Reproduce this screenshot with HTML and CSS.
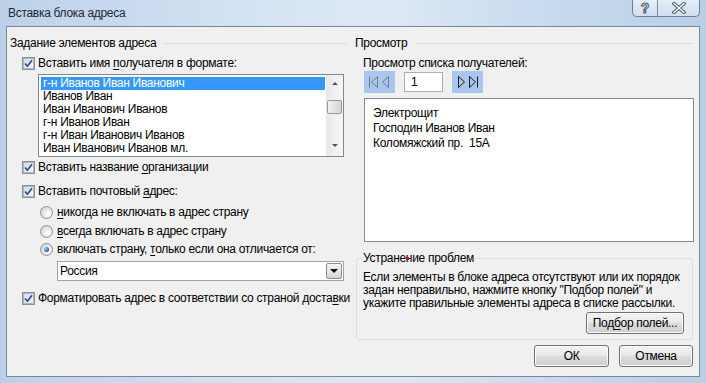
FILE: index.html
```html
<!DOCTYPE html>
<html>
<head>
  <meta charset="utf-8">
  <title>Вставка блока адреса</title>
  <link rel="stylesheet" href="styles.css">
</head>
<body>
  <div class="window">
    <div class="titlebar">
      <span class="title">Вставка блока адреса</span>
      <div class="caption-buttons">
        <span class="cap help">?</span>
        <span class="cap close">
          <svg width="16" height="12" viewBox="0 0 16 12">
            <path d="M3 1.5 L13 10.5 M13 1.5 L3 10.5" stroke="#4d5a6b" stroke-width="3.4" stroke-linecap="square" fill="none"/>
            <path d="M3 1.5 L13 10.5 M13 1.5 L3 10.5" stroke="#ffffff" stroke-width="1.4" stroke-linecap="square" fill="none"/>
          </svg>
        </span>
      </div>
    </div>

    <div class="client">
      <div class="col left">
        <div class="group-head"><span>Задание элементов адреса</span><i class="rule"></i></div>

        <label class="opt cb1"><span class="check"><svg width="9" height="9" viewBox="0 0 9 9"><path d="M1 4.5 L3.4 7.2 L8 1.2" stroke="#2f4a8c" stroke-width="1.7" fill="none"/></svg></span><span>Вставить имя <u>п</u>олучателя в формате:</span></label>

        <div class="listbox">
          <ul class="items">
            <li class="sel">г-н Иванов Иван Иванович</li>
            <li>Иванов Иван</li>
            <li>Иван Иванович Иванов</li>
            <li>г-н Иванов Иван</li>
            <li>г-н Иван Иванович Иванов</li>
            <li>Иван Иванович Иванов мл.</li>
          </ul>
          <div class="vscroll">
            <span class="arrow up"></span>
            <span class="thumb"></span>
            <span class="arrow down"></span>
          </div>
        </div>

        <label class="opt cb2"><span class="check"><svg width="9" height="9" viewBox="0 0 9 9"><path d="M1 4.5 L3.4 7.2 L8 1.2" stroke="#2f4a8c" stroke-width="1.7" fill="none"/></svg></span><span>Вставить название <u>о</u>рганизации</span></label>
        <label class="opt cb3"><span class="check"><svg width="9" height="9" viewBox="0 0 9 9"><path d="M1 4.5 L3.4 7.2 L8 1.2" stroke="#2f4a8c" stroke-width="1.7" fill="none"/></svg></span><span>Вставить почтовый <u>а</u>дрес:</span></label>

        <label class="opt radio r1"><span class="dot"></span><span><u>н</u>икогда не включать в адрес страну</span></label>
        <label class="opt radio r2"><span class="dot"></span><span><u>в</u>сегда включать в адрес страну</span></label>
        <label class="opt radio r3"><span class="dot on"></span><span>включать страну, <u>т</u>олько если она отличается от:</span></label>

        <div class="combo">
          <span class="combo-text">Россия</span>
          <span class="combo-btn"></span>
        </div>

        <label class="opt cb4"><span class="check"><svg width="9" height="9" viewBox="0 0 9 9"><path d="M1 4.5 L3.4 7.2 L8 1.2" stroke="#2f4a8c" stroke-width="1.7" fill="none"/></svg></span><span>Форматировать адрес в соответствии со страной доста<u>в</u>ки</span></label>
      </div>

      <div class="col right">
        <div class="group-head"><span>Просмотр</span><i class="rule"></i></div>

        <div class="preview-label">Просмотр списка получателей:</div>

        <div class="nav">
          <span class="nav-pair">
            <svg width="31" height="22" viewBox="0 0 31 22">
              <path d="M5.5 5.5 V16.5 M13.5 5.5 L7.5 11 L13.5 16.5 Z M24.5 5.5 L18.5 11 L24.5 16.5 Z" stroke="#6c7a8c" fill="none"/>
            </svg>
          </span>
          <span class="record">1</span>
          <span class="nav-pair">
            <svg width="31" height="22" viewBox="0 0 31 22">
              <path d="M6.5 5.5 L12.5 11 L6.5 16.5 Z M17.5 5.5 L23.5 11 L17.5 16.5 Z M25.5 5.5 V16.5" stroke="#1b1b1b" fill="none"/>
            </svg>
          </span>
        </div>

        <div class="preview">
          <div>Электрощит</div>
          <div>Господин Иванов Иван</div>
          <div>Коломяжский пр.&nbsp; 15A</div>
        </div>

        <fieldset class="trouble">
          <legend>Устранение проблем</legend>
          <i class="marker"></i>
          <p>Если элементы в блоке адреса отсутствуют или их порядок<br>задан неправильно, нажмите кнопку "Подбор полей" и<br>укажите правильные элементы адреса в списке рассылки.</p>
          <div class="trouble-actions"><button class="btn match">Под<u>б</u>ор полей...</button></div>
        </fieldset>

        <div class="dialog-actions">
          <button class="btn ok">ОК</button>
          <button class="btn cancel">Отмена</button>
        </div>
      </div>
    </div>
  </div>
</body>
</html>
```

FILE: styles.css
```css
* {
  box-sizing: border-box;
}

body {
  margin: 0;
  font-family: "Liberation Sans", Arial, sans-serif;
  font-size: 12px;
  letter-spacing: -0.3px;
  color: #000;
  background: #c3d6ea;
}

u {
  text-decoration: underline;
  text-underline-offset: 2px;
}

.window {
  width: 706px;
  height: 383px;
  padding: 0 6px 6px;
  display: flex;
  flex-direction: column;
  background: linear-gradient(to right, #bcd1e9, #d4e3f3 35%, #dce8f5 55%, #c6d9ee 80%, #b9cfe8);
}

/* title bar */
.titlebar {
  height: 26px;
  display: flex;
  justify-content: space-between;
}

.title {
  padding-left: 2px;
  line-height: 26px;
  color: #1e2833;
}

.caption-buttons {
  display: flex;
  height: 17px;
  border: 1px solid #6f7f92;
  border-top: none;
  border-radius: 0 0 5px 5px;
  background: linear-gradient(#e6eef8, #cfdeef);
}

.cap {
  display: flex;
  align-items: center;
  justify-content: center;
  height: 16px;
}

.help {
  width: 25px;
  border-right: 1px solid #7d8c9e;
  font-size: 14px;
  font-weight: bold;
  color: #fff;
  -webkit-text-stroke: 1px #4d5a6b;
}

.close {
  width: 41px;
}

/* client area */
.client {
  flex: 1;
  display: flex;
  border: 1px solid #7b8795;
  background: #f0f0f0;
}

.col {
  display: flex;
  flex-direction: column;
}

.left {
  width: 345px;
  padding-left: 3px;
  padding-right: 5px;
}

.right {
  width: 339px;
  margin-left: 3px;
}

.group-head {
  display: flex;
  align-items: center;
  height: 16px;
  margin-top: 8px;
}

.rule {
  flex: 1;
  height: 1px;
  margin-left: 8px;
  background: #d5dfe5;
}

/* checkboxes and radios */
.opt {
  display: flex;
  align-items: center;
  height: 16px;
  padding-left: 12px;
  white-space: nowrap;
}

.check {
  width: 13px;
  height: 13px;
  margin-right: 3px;
  border: 1px solid #8e8f8f;
  padding: 1px;
  background: #f4f4f4;
  display: flex;
}

.check svg {
  width: 9px;
  height: 9px;
  background: linear-gradient(135deg, #d3dbe6, #f7f9fb);
  outline: 1px solid #aeb6c1;
}

.cb1 { margin-top: 4px; }
.cb2 { margin-top: 2px; }
.cb3 { margin-top: 8px; }
.cb4 { margin-top: 9px; }

.radio {
  padding-left: 30px;
}

.dot {
  width: 13px;
  height: 13px;
  margin-right: 4px;
  border-radius: 50%;
  border: 1px solid #8e8f8f;
  background: radial-gradient(circle at 65% 65%, #ffffff, #dcdcdc 70%, #c9c9c9);
  display: flex;
  align-items: center;
  justify-content: center;
}

.dot.on::after {
  content: "";
  width: 5px;
  height: 5px;
  border-radius: 50%;
  background: radial-gradient(circle at 35% 35%, #9fd0f6, #2c6fb4 60%, #123d72);
}

.r1 { margin-top: 5px; }
.r2 { margin-top: 3px; }
.r3 { margin-top: 2px; }

/* listbox */
.listbox {
  display: flex;
  width: 306px;
  height: 83px;
  margin-top: 3px;
  margin-left: 28px;
  border: 1px solid #828790;
  background: #fff;
}

.items {
  flex: 1;
  list-style: none;
  margin: 0;
  padding: 2px 1px 0 2px;
}

.items li {
  height: 13px;
  line-height: 13px;
  padding-left: 2px;
  white-space: nowrap;
}

.items li.sel {
  background: #3399ff;
  color: #fff;
}

.vscroll {
  width: 17px;
  display: flex;
  flex-direction: column;
  align-items: center;
  background: linear-gradient(to right, #e8e8e8, #f6f6f6);
}

.arrow {
  width: 0;
  height: 0;
  border-left: 3px solid transparent;
  border-right: 3px solid transparent;
}

.arrow.up {
  margin-top: 7px;
  border-bottom: 3px solid #555;
}

.arrow.down {
  margin-top: auto;
  margin-bottom: 9px;
  border-top: 3px solid #555;
}

.thumb {
  width: 15px;
  height: 14px;
  margin-top: 15px;
  border: 1px solid #979797;
  border-radius: 2px;
  background: linear-gradient(to right, #f3f3f3, #e2e2e2 50%, #d6d6d6);
}

/* combo */
.combo {
  display: flex;
  align-items: center;
  width: 287px;
  height: 20px;
  margin-top: 4px;
  margin-left: 47px;
  border: 1px solid #a3a3a3;
  background: #fff;
}

.combo-text {
  flex: 1;
  padding-left: 2px;
}

.combo-btn {
  width: 16px;
  height: 16px;
  margin-right: 1px;
  border: 1px solid #8d8d8d;
  border-radius: 2px;
  background: linear-gradient(#f4f4f4, #e6e6e6 50%, #d4d4d4);
  display: flex;
  align-items: center;
  justify-content: center;
}

.combo-btn::after {
  content: "";
  border-left: 4px solid transparent;
  border-right: 4px solid transparent;
  border-top: 4px solid #111;
}

/* preview */
.preview-label {
  height: 16px;
  line-height: 16px;
  margin-top: 4px;
  padding-left: 8px;
}

.nav {
  display: flex;
  align-items: center;
  height: 22px;
  padding-left: 9px;
}

.nav-pair {
  display: flex;
  width: 31px;
  height: 22px;
  background: #a9c6ee;
}

.record {
  width: 39px;
  height: 20px;
  margin: 0 9px;
  padding-left: 6px;
  line-height: 18px;
  border: 1px solid #abadb3;
  background: #fff;
}

.preview {
  height: 144px;
  margin-top: 5px;
  margin-left: 9px;
  padding: 7px 8px 0;
  border: 1px solid #828790;
  background: #fff;
  line-height: 15px;
}

/* trouble shooting */
.trouble {
  position: relative;
  width: 337px;
  margin: 8px 0 0 1px;
  padding: 5px 8px 5px 6px;
  border: 1px solid #d5dfe5;
  border-radius: 3px;
}

.trouble legend {
  padding: 0 1px;
  margin-left: -1px;
  line-height: 16px;
}

.marker {
  position: absolute;
  left: 49px;
  top: -9px;
  width: 3px;
  height: 3px;
  background: #e01010;
}

.trouble p {
  margin: 0;
  line-height: 13px;
  white-space: nowrap;
}

.trouble-actions {
  display: flex;
  justify-content: flex-end;
  margin-top: 2px;
}

/* buttons */
.btn {
  height: 22px;
  padding: 0;
  font-family: inherit;
  font-size: 12px;
  letter-spacing: -0.3px;
  color: #000;
  border: 1px solid #707070;
  border-radius: 3px;
  background: linear-gradient(#f2f2f2, #ebebeb 45%, #dddddd 50%, #cfcfcf);
  box-shadow: inset 0 0 0 1px #fcfcfc;
}

.match {
  width: 98px;
}

.dialog-actions {
  display: flex;
  justify-content: flex-end;
  gap: 10px;
  margin-top: 5px;
  padding-right: 1px;
}

.ok {
  width: 75px;
}

.cancel {
  width: 74px;
}
```
